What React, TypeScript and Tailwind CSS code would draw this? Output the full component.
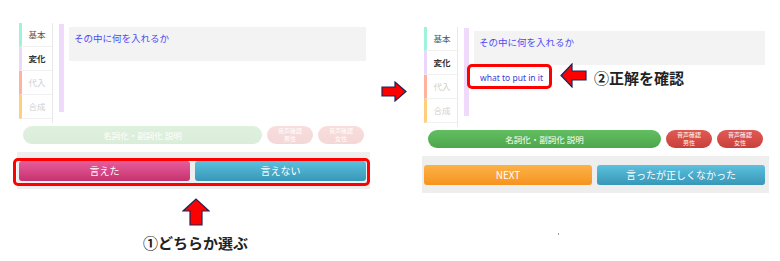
import React from "react";

type Tab = { label: string; bar: string; text: string; bold?: boolean };

const tabs: Tab[] = [
  { label: "基本", bar: "border-l-[#9ff3da]", text: "text-[#555]" },
  { label: "変化", bar: "border-l-[#ecd6fb]", text: "text-[#333]", bold: true },
  { label: "代入", bar: "border-l-[#ffb39c]", text: "text-[#cfcfcf]" },
  { label: "合成", bar: "border-l-[#ffcf7c]", text: "text-[#cfcfcf]" },
];

const font = { fontFamily: '"Noto Sans CJK JP", "Noto Sans", sans-serif' };

// block arrow drawn the same way as the callouts in the slide
function Arrow({ dir, className }: { dir: "right" | "up" | "left"; className: string }) {
  const d = {
    right: "M1 6 H14 V1 L25 10.5 L14 20 V15 H1 Z",
    up: "M8 27 V13 H1 L14 1 L27 13 H20 V27 Z",
    left: "M26 8 H12 V1 L1 12.5 L12 24 V17 H26 Z",
  }[dir];
  const box = { right: "0 0 26 21", up: "0 0 28 28", left: "0 0 27 25" }[dir];
  return (
    <svg viewBox={box} className={className}>
      <path d={d} fill="#ff0000" stroke="#1d2657" strokeWidth="1.2" strokeLinejoin="miter" />
    </svg>
  );
}

function Panel({
  width,
  faded,
  answer,
  buttons,
}: {
  width: number;
  faded?: boolean;
  answer?: boolean;
  buttons: { label: string; cls: string }[];
}) {
  return (
    <div className="flex flex-col" style={{ width }}>
      <div className="flex h-[100px]">
        <div className="ml-[2px] w-[34px] border-r border-[#e9e9e9]">
          {tabs.map((t) => (
            <div
              key={t.label}
              className={`h-[24px] border-l-[3px] border-b border-b-[#f0f0f0] ${t.bar} ${t.text} ${
                t.bold ? "font-bold" : ""
              } flex items-center justify-center text-[8.5px]`}
            >
              {t.label}
            </div>
          ))}
        </div>
        <div className="ml-[6px] mt-[1px] h-[88px] w-[5px] bg-[#efdafc]" />
        <div className="ml-[5px] mr-[4px] flex-1">
          <div className="mt-[4px] h-[34px] bg-[#f3f3f3] px-[5px] pt-[4px] text-[9.5px] leading-[14px] text-[#4b4bf7]">
            その中に何を入れるか
          </div>
          {answer && (
            <div className="mt-[7px] pl-[6px] text-[8.5px] leading-[12px] text-[#3c3cd6]" style={{ fontFamily: '"Noto Sans", sans-serif' }}>
              what to put in it
            </div>
          )}
        </div>
      </div>

      <div className={`mt-[3px] flex gap-[5px] px-[6px] ${faded ? "opacity-20" : ""}`}>
        <div className="flex h-[18px] flex-1 items-center justify-center rounded-full bg-gradient-to-b from-[#62bf60] to-[#4ea64c] text-[8.5px] text-white">
          名詞化・副詞化 説明
        </div>
        {["男性", "女性"].map((g) => (
          <div
            key={g}
            className="flex h-[18px] w-[46px] flex-col items-center justify-center rounded-full bg-gradient-to-b from-[#e05a55] to-[#c9403b] text-[6px] leading-[8px] text-white"
          >
            <span>音声確認</span>
            <span>{g}</span>
          </div>
        ))}
      </div>

      <div className="mt-[8px] flex h-[37px] items-center gap-[5px] bg-[#eeeeee] pl-[2px] pr-[4px]">
        {buttons.map((b) => (
          <div
            key={b.label}
            className={`flex h-[20px] flex-1 items-center justify-center rounded-[3px] text-[10px] text-white ${b.cls}`}
          >
            {b.label}
          </div>
        ))}
      </div>
    </div>
  );
}

export default function App() {
  return (
    <div className="relative h-[261px] w-[780px] overflow-hidden bg-white" style={font}>
      <div className="flex items-start">
        <div className="ml-[17px] mt-[23px]">
          <Panel
            width={353}
            faded
            buttons={[
              { label: "言えた", cls: "bg-gradient-to-b from-[#e85c9c] to-[#c5326f] text-[#f8d6e6]" },
              { label: "言えない", cls: "bg-gradient-to-b from-[#5cc0de] to-[#3797b8] text-[#dff2f8]" },
            ]}
          />
        </div>
        <div className="ml-[52px] mt-[27px]">
          <Panel
            width={347}
            answer
            buttons={[
              { label: "NEXT", cls: "bg-gradient-to-b from-[#fbb246] to-[#f7941d]" },
              { label: "言ったが正しくなかった", cls: "bg-gradient-to-b from-[#5cc0de] to-[#3797b8] text-[#e6f5fa]" },
            ]}
          />
        </div>
      </div>

      {/* annotations laid over the screenshots */}
      <div className="absolute left-[13px] top-[158px] h-[28px] w-[357px] rounded-[5px] border-[3px] border-[#ff0000]" />
      <div className="absolute left-[467px] top-[64px] h-[25px] w-[85px] rounded-[5px] border-[3px] border-[#ff0000]" />

      <Arrow dir="right" className="absolute left-[381px] top-[81px] h-[21px] w-[26px]" />
      <Arrow dir="up" className="absolute left-[182px] top-[198px] h-[28px] w-[28px]" />
      <Arrow dir="left" className="absolute left-[560px] top-[63px] h-[25px] w-[27px]" />

      <div className="absolute left-[143px] top-[233px] text-[15px] font-bold leading-[20px] text-[#222]">
        ①どちらか選ぶ
      </div>
      <div className="absolute left-[594px] top-[68px] text-[15px] font-bold leading-[20px] text-[#222]">
        ②正解を確認
      </div>
      <div className="absolute left-[558px] top-[233px] h-[2px] w-[1px] bg-[#999]" />
    </div>
  );
}
